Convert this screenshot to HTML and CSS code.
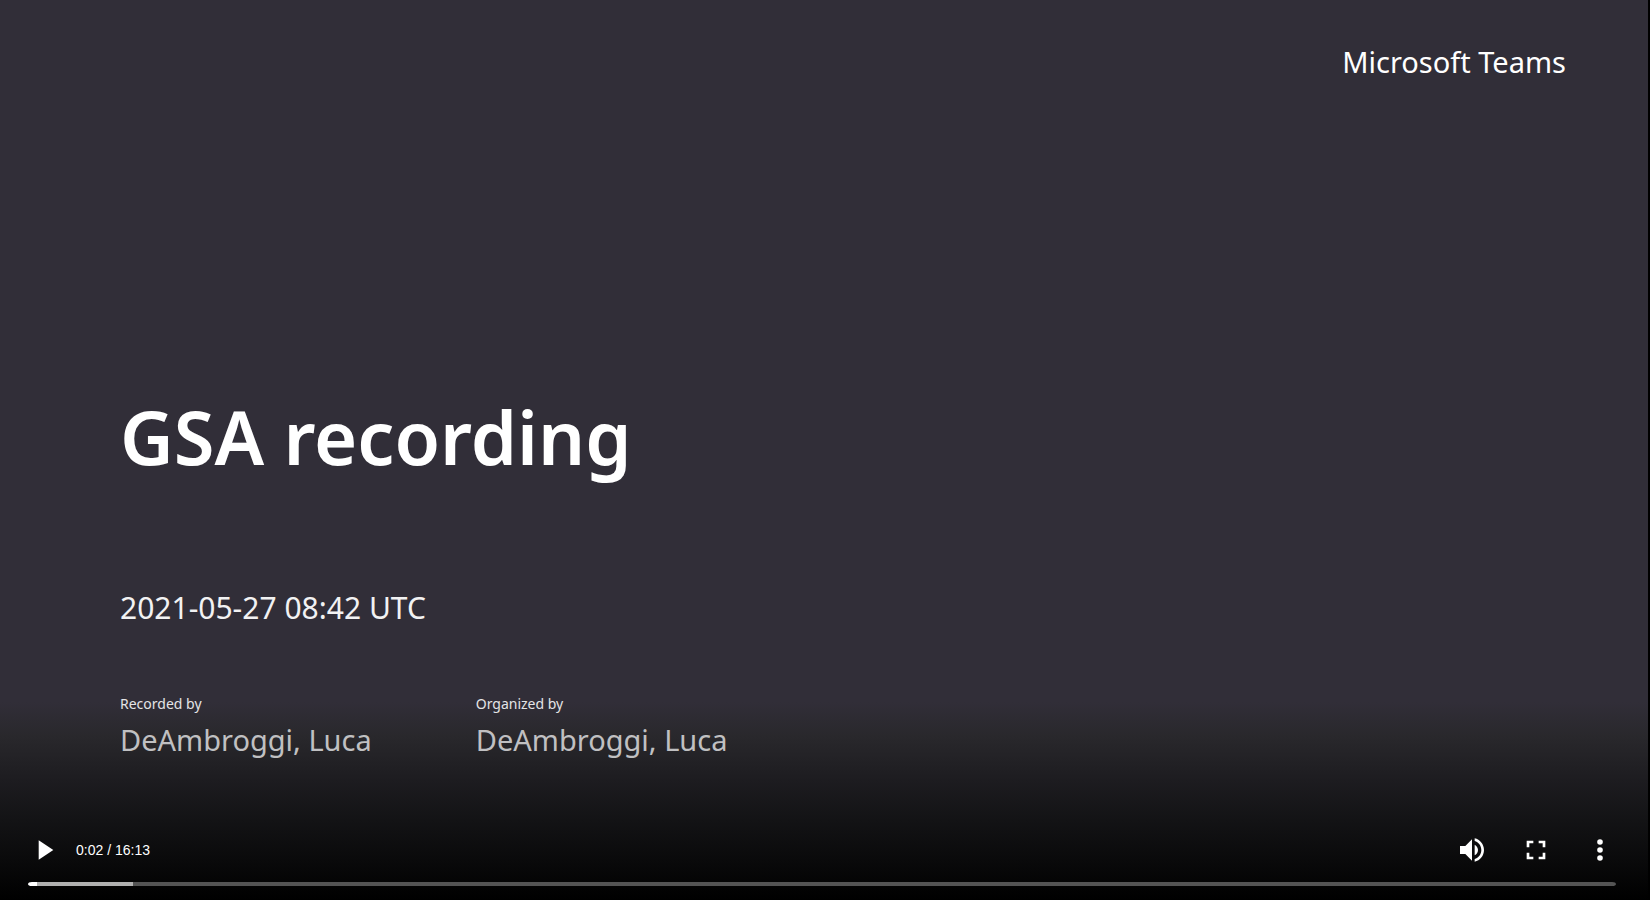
FILE: index.html
```html
<!DOCTYPE html>
<html lang="en">
<head>
<meta charset="utf-8">
<title>GSA recording</title>
<link rel="stylesheet" href="styles.css">
</head>
<body>
<main class="player">
  <section class="slide">
    <p class="brand">Microsoft Teams</p>
    <h1 class="title">GSA recording</h1>
    <p class="date">2021-05-27 08:42 UTC</p>
    <dl class="people">
      <div class="person">
        <dt class="role">Recorded by</dt>
        <dd class="name">DeAmbroggi, Luca</dd>
      </div>
      <div class="person">
        <dt class="role">Organized by</dt>
        <dd class="name">DeAmbroggi, Luca</dd>
      </div>
    </dl>
  </section>
  <section class="controls" aria-label="Video controls">
    <div class="buttons">
      <button class="control" type="button" aria-label="Play">
        <svg class="icon" viewBox="0 0 24 24"><path d="M8 4.700v14.600l11-7.300z"/></svg>
      </button>
      <span class="time">0:02 / 16:13</span>
      <div class="actions">
        <button class="control" type="button" aria-label="Mute">
          <svg class="icon" viewBox="0 0 24 24"><path d="M3 9v6h4l5 5V4L7 9H3zM16.500 12c0-1.770-1.020-3.290-2.500-4.030v8.050c1.480-.73 2.500-2.250 2.500-4.020zM14 3.230v2.060c2.890.86 5 3.540 5 6.710s-2.110 5.850-5 6.710v2.060c4.010-.91 7-4.490 7-8.770s-2.990-7.860-7-8.770z"/></svg>
        </button>
        <button class="control" type="button" aria-label="Full screen">
          <svg class="icon" viewBox="0 0 24 24"><path d="M7 14H5v5h5v-2H7v-3zM5 10h2V7h3V5H5v5zM17 17h-3v2h5v-5h-2v3zM14 5v2h3v3h2V5h-5z"/></svg>
        </button>
        <button class="control" type="button" aria-label="More options">
          <svg class="icon" viewBox="0 0 24 24"><circle cx="12" cy="6" r="2.100"/><circle cx="12" cy="12" r="2.100"/><circle cx="12" cy="18" r="2.100"/></svg>
        </button>
      </div>
    </div>
    <input class="timeline" type="range" min="0" max="973" value="2" aria-label="Seek">
  </section>
</main>
</body>
</html>
```
FILE: styles.css
```css
* {
  box-sizing: border-box;
}

body {
  margin: 0;
  padding-right: 2px;
  background: #000;
  color: #fff;
  font-family: "Noto Sans", "Open Sans", sans-serif;
}

.player {
  display: flex;
  flex-direction: column;
  justify-content: space-between;
  min-height: 100vh;
  background:
    linear-gradient(to top, #000, #0a0a0b 40px, #131315 80px, #1d1c20 120px, #29282c 164px, #312e38 198px, #312e38);
}

.slide {
  display: flex;
  flex-direction: column;
  padding: 40px 82px 0 120px;
}

.brand,
.title,
.date,
.people,
.name {
  margin: 0;
}

.brand,
.date,
.name {
  font-size: 29px;
  line-height: 44px;
}

.brand {
  align-self: flex-end;
}

.title {
  margin-top: 298px;
  font-size: 74px;
  font-weight: 600;
  line-height: 110px;
}

.date {
  margin-top: 94px;
  font-size: 30px;
  color: #f2f2f3;
}

.people {
  display: flex;
  gap: 104px;
  margin-top: 64px;
}

.role {
  font-size: 14px;
  line-height: 20px;
  color: #e4e4e6;
}

.name {
  margin-top: 4px;
  color: #c0c0c2;
}

.controls {
  padding: 0 32px 12px 28px;
}

.buttons {
  display: flex;
  align-items: center;
  gap: 16px;
}

.control {
  display: block;
  padding: 0;
  border: 0;
  background: none;
  color: #fff;
}

.icon {
  display: block;
  width: 32px;
  height: 32px;
  fill: currentColor;
}

.time {
  font-family: "Liberation Sans", Arial, sans-serif;
  font-size: 14px;
  line-height: 20px;
}

.actions {
  display: flex;
  gap: 32px;
  margin-left: auto;
}

.timeline {
  display: block;
  width: 100%;
  height: 8px;
  margin: 14px 0 0;
  border: solid transparent;
  border-width: 2px 0;
  border-radius: 4px;
  appearance: none;
  background: linear-gradient(to right, #fff 9px, #b0b0b0 9px, #b0b0b0 105px, #545454 105px) padding-box;
}

.timeline::-webkit-slider-thumb {
  appearance: none;
  width: 0;
  height: 0;
}
```
